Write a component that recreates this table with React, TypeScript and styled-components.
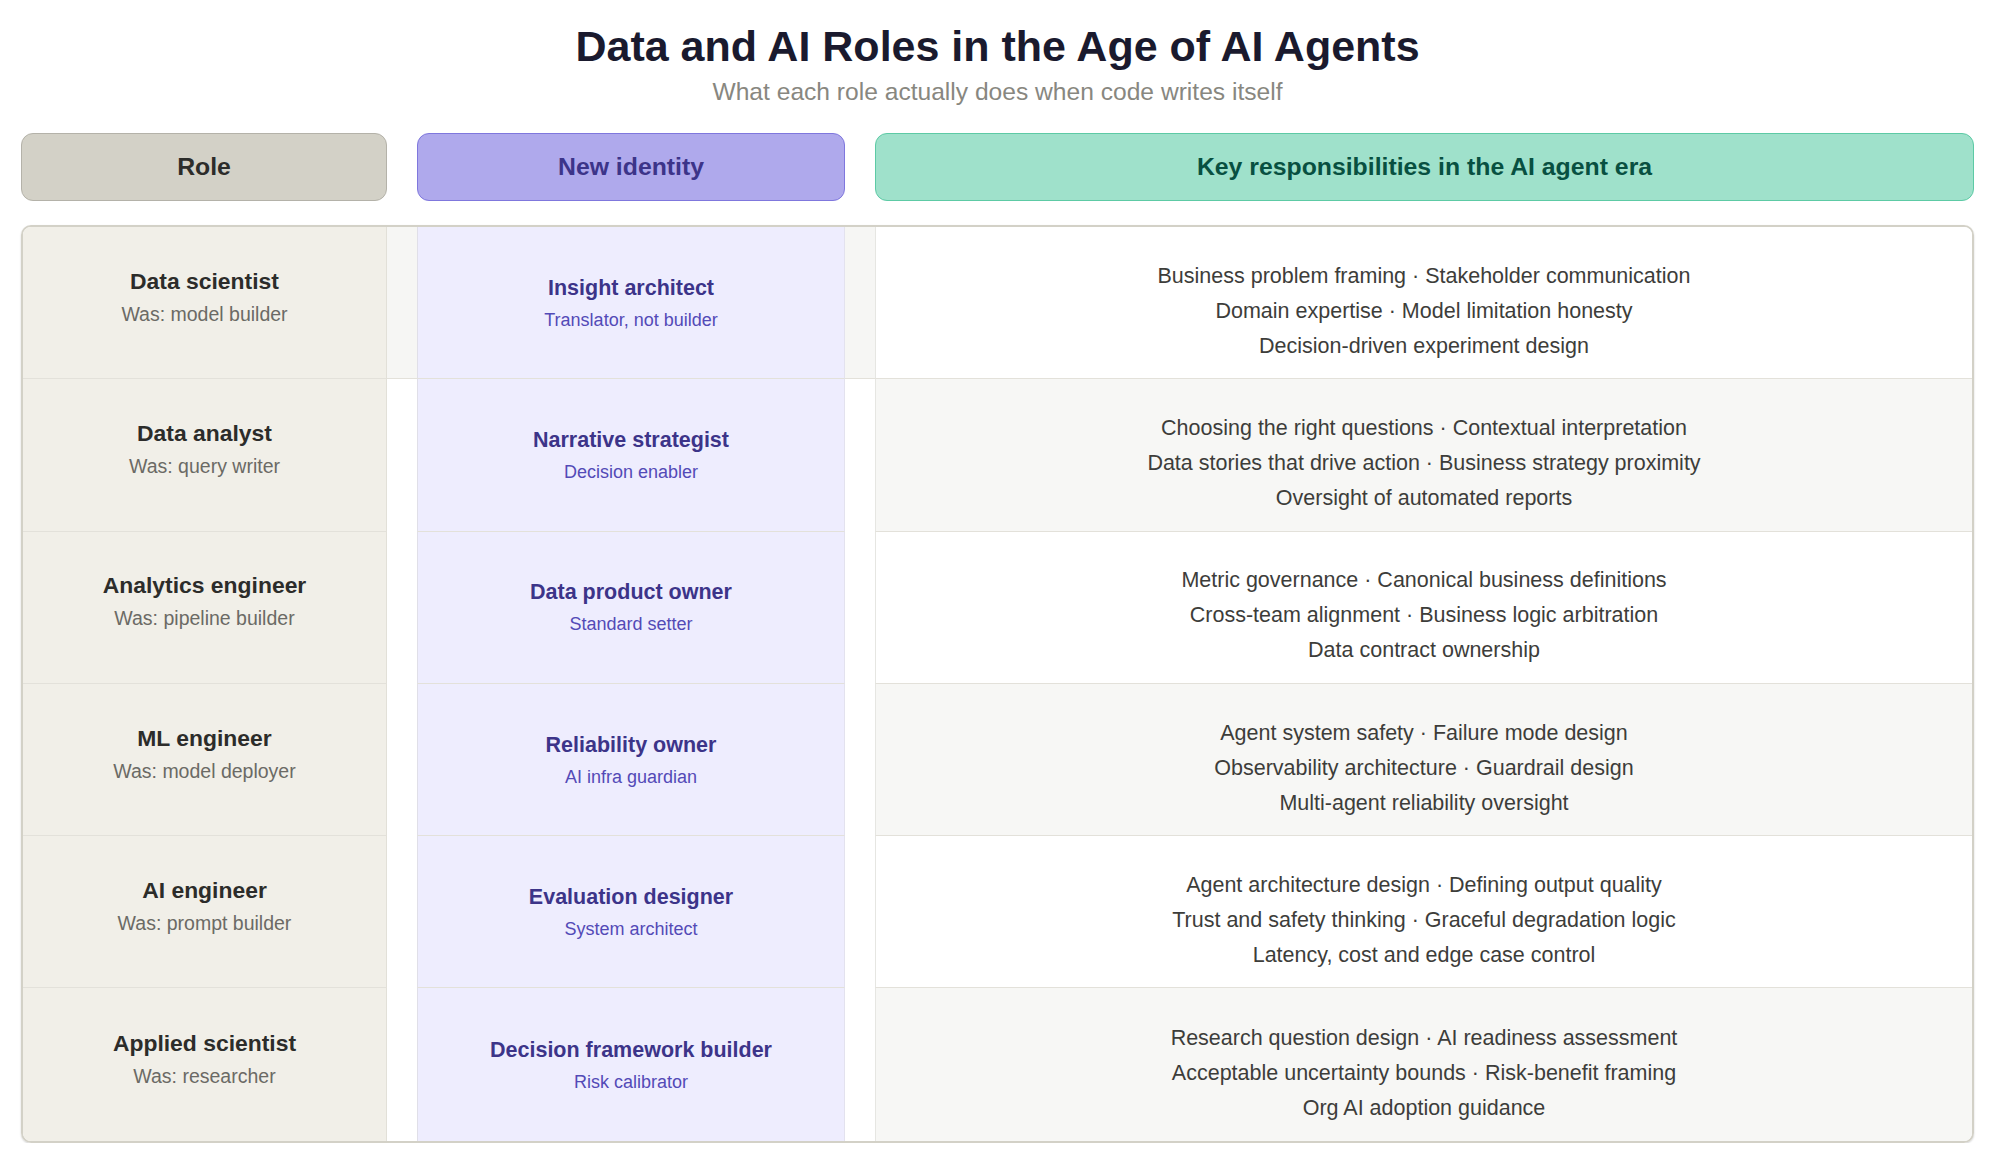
import React from "react";
import styled, { createGlobalStyle } from "styled-components";

const GlobalStyle = createGlobalStyle`
  html, body { margin: 0; padding: 0; background: #ffffff; }
  body { font-family: "Liberation Sans", Arial, Helvetica, sans-serif; }
  * { box-sizing: border-box; }
`;

const Page = styled.div`
  padding: 21px 25px 0 21px;
  width: 1999px;
`;

const Title = styled.h1`
  margin: 0;
  text-align: center;
  font-size: 43px;
  line-height: 50px;
  font-weight: 700;
  color: #1a1a2e;
`;

const Subtitle = styled.p`
  margin: 7px 0 0;
  text-align: center;
  font-size: 24.6px;
  line-height: 28px;
  color: #888780;
`;

const COLS = "366px 428px 1fr";

const HeaderRow = styled.div`
  margin-top: 27px;
  display: grid;
  grid-template-columns: ${COLS};
  column-gap: 30px;
`;

type Tone = "gray" | "purple" | "teal";

const toneMap: Record<Tone, { bg: string; border: string; fg: string }> = {
  gray: { bg: "#d3d1c7", border: "#b4b2a9", fg: "#2c2c2a" },
  purple: { bg: "#afa9ec", border: "#7f77dd", fg: "#3c3489" },
  teal: { bg: "#9fe1cb", border: "#5dcaa5", fg: "#085041" },
};

const HeaderCell = styled.div<{ $tone: Tone }>`
  height: 68px;
  border-radius: 12px;
  border: 1px solid ${(p) => toneMap[p.$tone].border};
  background: ${(p) => toneMap[p.$tone].bg};
  color: ${(p) => toneMap[p.$tone].fg};
  display: flex;
  align-items: center;
  justify-content: center;
  font-size: 24.8px;
  font-weight: 700;
`;

const Table = styled.div`
  margin-top: 24px;
  border: 2px solid #d3d1c7;
  border-radius: 10px;
  overflow: hidden;
  box-shadow: 0 1px 2px rgba(0, 0, 0, 0.18);
  display: grid;
  grid-template-columns: 364px 30px 428px 30px 1fr;
`;

const RowDivider = `border-bottom: 1px solid #e3e1da;`;
const ROW_H = "152.3px";

const RoleCell = styled.div<{ $last: boolean }>`
  height: ${ROW_H};
  background: #f1efe8;
  border-right: 1px solid #e2e0d8;
  ${(p) => (p.$last ? "" : RowDivider)}
  display: flex;
  flex-direction: column;
  align-items: center;
  justify-content: center;
  padding-bottom: 13px;
  gap: 7px;
`;

const RoleName = styled.div`
  font-size: 22.9px;
  line-height: 28px;
  font-weight: 700;
  color: #2c2c2a;
`;

const RoleWas = styled.div`
  font-size: 19.5px;
  line-height: 24px;
  color: #6b6a65;
`;

const GapCell = styled.div<{ $shaded: boolean }>`
  height: ${ROW_H};
  background: ${(p) => (p.$shaded ? "#f6f6f4" : "#ffffff")};
  ${(p) => (p.$shaded ? RowDivider : "")}
`;

const IdentityCell = styled.div<{ $last: boolean }>`
  height: ${ROW_H};
  background: #eeedfe;
  border-left: 1px solid #e0dfe8;
  border-right: 1px solid #e3e2ee;
  ${(p) => (p.$last ? "" : RowDivider)}
  display: flex;
  flex-direction: column;
  align-items: center;
  justify-content: center;
  gap: 6px;
`;

const IdentityName = styled.div`
  font-size: 21.5px;
  line-height: 28px;
  font-weight: 700;
  color: #3c3489;
`;

const IdentityNote = styled.div`
  font-size: 18px;
  line-height: 24px;
  color: #534ab7;
`;

const RespCell = styled.div<{ $last: boolean; $shaded: boolean }>`
  height: ${ROW_H};
  background: ${(p) => (p.$shaded ? "#f7f7f5" : "#ffffff")};
  border-left: 1px solid #e6e6e2;
  ${(p) => (p.$last ? "" : RowDivider)}
  display: flex;
  flex-direction: column;
  align-items: center;
  justify-content: center;
  padding-top: 17px;
`;

const RespLine = styled.div`
  font-size: 21.5px;
  line-height: 35px;
  color: #3d3d3a;
  white-space: nowrap;
`;

type Row = {
  role: string;
  was: string;
  identity: string;
  note: string;
  lines: string[];
};

const rows: Row[] = [
  {
    role: "Data scientist",
    was: "Was: model builder",
    identity: "Insight architect",
    note: "Translator, not builder",
    lines: [
      "Business problem framing · Stakeholder communication",
      "Domain expertise · Model limitation honesty",
      "Decision-driven experiment design",
    ],
  },
  {
    role: "Data analyst",
    was: "Was: query writer",
    identity: "Narrative strategist",
    note: "Decision enabler",
    lines: [
      "Choosing the right questions · Contextual interpretation",
      "Data stories that drive action · Business strategy proximity",
      "Oversight of automated reports",
    ],
  },
  {
    role: "Analytics engineer",
    was: "Was: pipeline builder",
    identity: "Data product owner",
    note: "Standard setter",
    lines: [
      "Metric governance · Canonical business definitions",
      "Cross-team alignment · Business logic arbitration",
      "Data contract ownership",
    ],
  },
  {
    role: "ML engineer",
    was: "Was: model deployer",
    identity: "Reliability owner",
    note: "AI infra guardian",
    lines: [
      "Agent system safety · Failure mode design",
      "Observability architecture · Guardrail design",
      "Multi-agent reliability oversight",
    ],
  },
  {
    role: "AI engineer",
    was: "Was: prompt builder",
    identity: "Evaluation designer",
    note: "System architect",
    lines: [
      "Agent architecture design · Defining output quality",
      "Trust and safety thinking · Graceful degradation logic",
      "Latency, cost and edge case control",
    ],
  },
  {
    role: "Applied scientist",
    was: "Was: researcher",
    identity: "Decision framework builder",
    note: "Risk calibrator",
    lines: [
      "Research question design · AI readiness assessment",
      "Acceptable uncertainty bounds · Risk-benefit framing",
      "Org AI adoption guidance",
    ],
  },
];

export default function App() {
  return (
    <>
      <GlobalStyle />
      <Page>
        <Title>Data and AI Roles in the Age of AI Agents</Title>
        <Subtitle>What each role actually does when code writes itself</Subtitle>
        <HeaderRow>
          <HeaderCell $tone="gray">Role</HeaderCell>
          <HeaderCell $tone="purple">New identity</HeaderCell>
          <HeaderCell $tone="teal">Key responsibilities in the AI agent era</HeaderCell>
        </HeaderRow>
        <Table>
          {rows.map((r, i) => {
            const last = i === rows.length - 1;
            const first = i === 0;
            return (
              <React.Fragment key={r.role}>
                <RoleCell $last={last}>
                  <RoleName>{r.role}</RoleName>
                  <RoleWas>{r.was}</RoleWas>
                </RoleCell>
                <GapCell $shaded={first} />
                <IdentityCell $last={last}>
                  <IdentityName>{r.identity}</IdentityName>
                  <IdentityNote>{r.note}</IdentityNote>
                </IdentityCell>
                <GapCell $shaded={first} />
                <RespCell $last={last} $shaded={i % 2 === 1}>
                  {r.lines.map((l) => (
                    <RespLine key={l}>{l}</RespLine>
                  ))}
                </RespCell>
              </React.Fragment>
            );
          })}
        </Table>
      </Page>
    </>
  );
}
